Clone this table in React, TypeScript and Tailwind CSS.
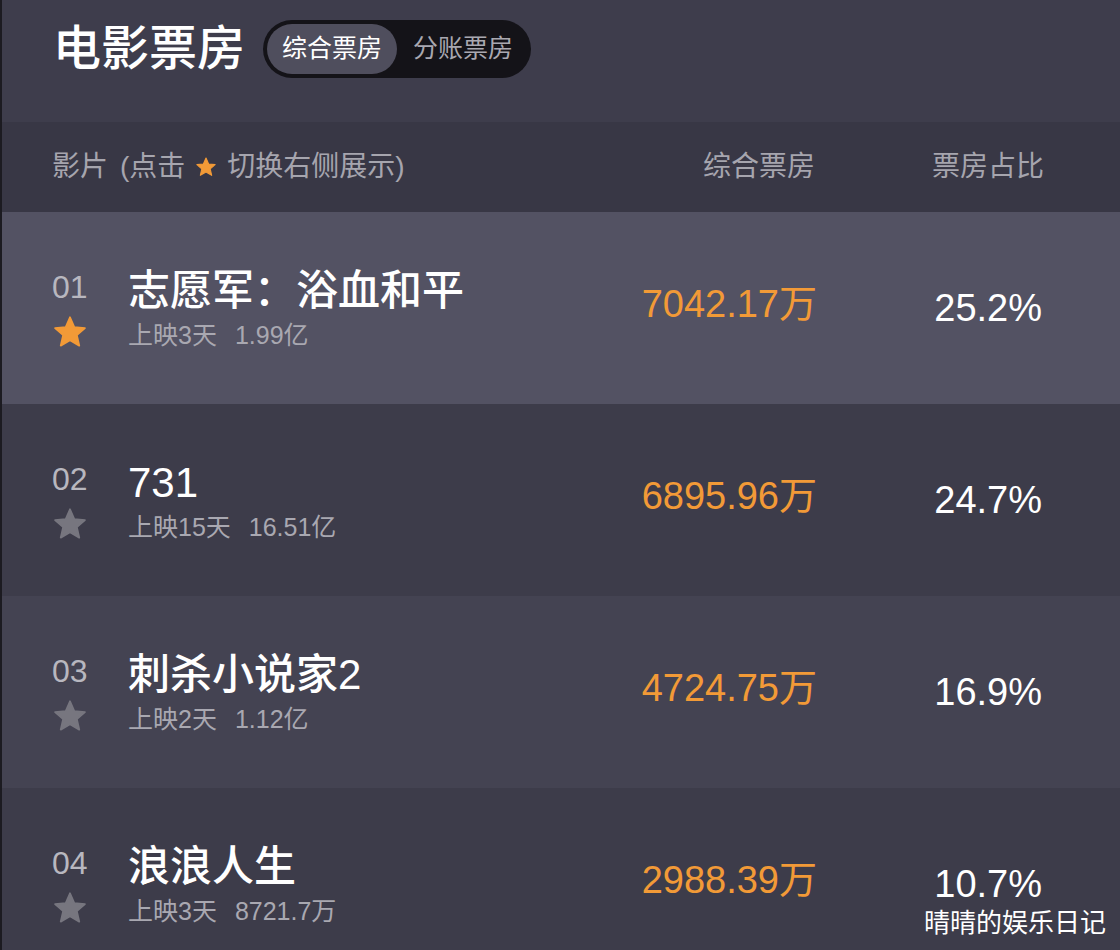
import React from "react";

const FONT = { fontFamily: '"Liberation Sans", "Noto Sans CJK SC", sans-serif' };

type Movie = {
  rank: string;
  title: string;
  days: string;
  total: string;
  box: string;
  share: string;
  bg: string;
  starred?: boolean;
};

const movies: Movie[] = [
  { rank: "01", title: "志愿军：浴血和平", days: "上映3天", total: "1.99亿", box: "7042.17万", share: "25.2%", bg: "bg-[#535263]", starred: true },
  { rank: "02", title: "731", days: "上映15天", total: "16.51亿", box: "6895.96万", share: "24.7%", bg: "bg-[#3d3c4a]" },
  { rank: "03", title: "刺杀小说家2", days: "上映2天", total: "1.12亿", box: "4724.75万", share: "16.9%", bg: "bg-[#444352]" },
  { rank: "04", title: "浪浪人生", days: "上映3天", total: "8721.7万", box: "2988.39万", share: "10.7%", bg: "bg-[#3d3c4a]" },
];

const Star = ({ className }: { className: string }) => (
  <svg viewBox="0 0 24 24" className={className} fill="currentColor" stroke="currentColor" strokeWidth="1.2" strokeLinejoin="round">
    <path d="M12 2.2l2.85 6.55 7.1.65-5.38 4.72 1.6 6.98L12 17.45l-6.17 3.65 1.6-6.98L2.05 9.4l7.1-.65z" />
  </svg>
);

const MovieRow = ({ m }: { m: Movie }) => {
  return (
    <div className={`h-[192px] shrink-0 flex items-center pl-[50px] pr-[78px] ${m.bg}`}>
      {/* rank + star */}
      <div className="w-[76px] flex flex-col items-start">
        <div className="text-[32px] leading-none text-[#b8b7bf] mt-[4px]">{m.rank}</div>
        <Star className={`w-[36px] h-[36px] mt-[11px] ${m.starred ? "text-[#f29a37]" : "text-[#77767f]"}`} />
      </div>

      {/* title */}
      <div className="flex-1 flex flex-col">
        <div className="text-[42px] leading-[48px] font-medium text-white">{m.title}</div>
        <div className="text-[25px] leading-[30px] text-[#a9a8b1] mt-[5px]">
          {m.days}
          <span className="ml-[18px]">{m.total}</span>
        </div>
      </div>

      {/* box office */}
      <div className="text-[38px] leading-none text-[#f29a37] text-right -mt-[8px] mr-[-2px]">{m.box}</div>

      {/* share */}
      <div className="w-[227px] text-[38px] leading-none text-white text-right">{m.share}</div>
    </div>
  );
};

export default function App() {
  return (
    <div style={FONT} className="relative w-[1120px] h-[950px] overflow-hidden bg-[#3e3d4c] border-l-2 border-[#1c1b21] flex flex-col">
      {/* Header */}
      <div className="h-[122px] shrink-0 flex items-center pl-[51px] pb-[24px] gap-[18px]">
        <h1 className="text-[48px] leading-none font-medium text-white">电影票房</h1>
        <div className="flex items-center rounded-full bg-[#141318] p-[4px]">
          <div className="h-[50px] px-[15px] flex items-center rounded-full bg-[#4f4e5d] text-[25px] text-white">综合票房</div>
          <div className="h-[50px] pl-[16px] pr-[14px] flex items-center text-[25px] text-[#a9a8b0]">分账票房</div>
        </div>
      </div>

      {/* Column header */}
      <div className="h-[90px] shrink-0 bg-[#383745] flex items-center pl-[50px] pr-[76px] text-[28px] leading-none text-[#a6a5ae]">
        <div className="flex-1 flex items-center">
          <span>影片</span>
          <span className="ml-[12px]">(点击</span>
          <Star className="w-[22px] h-[22px] mx-[10px] text-[#f29a37]" />
          <span>切换右侧展示)</span>
        </div>
        <div className="text-right">综合票房</div>
        <div className="w-[229px] text-right">票房占比</div>
      </div>

      {/* Rows */}
      {movies.map((m) => (
        <MovieRow key={m.rank} m={m} />
      ))}

      {/* Watermark */}
      <div className="absolute right-[14px] bottom-[14px] text-[26px] leading-none text-white">晴晴的娱乐日记</div>
    </div>
  );
}
